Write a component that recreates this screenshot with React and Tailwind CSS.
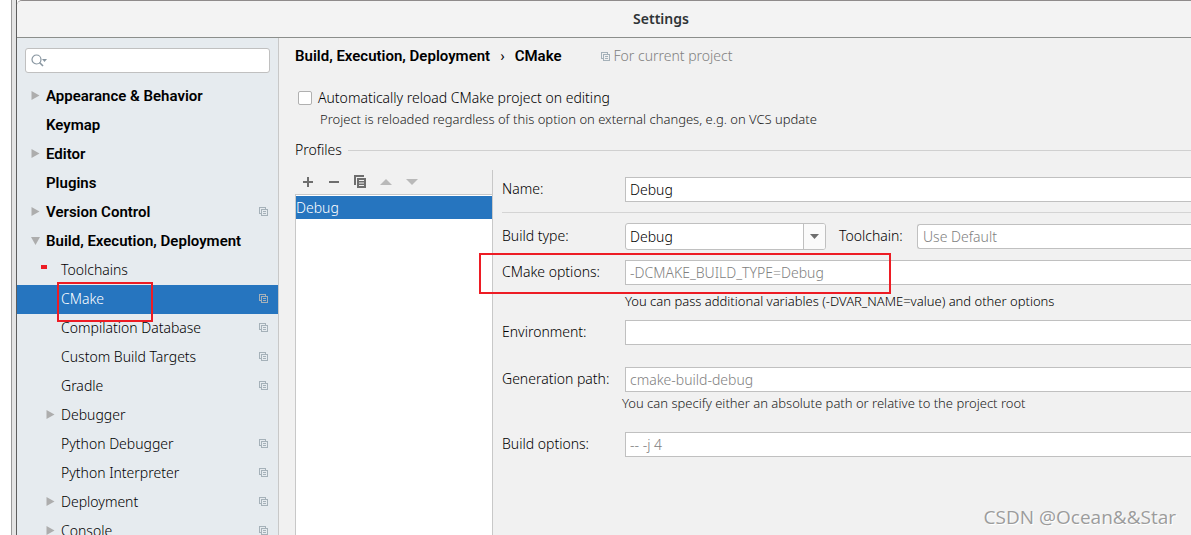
import React, { useState } from 'react'

const TREE = [
  { label: 'Appearance & Behavior', top: true, arrow: 'closed' },
  { label: 'Keymap', top: true },
  { label: 'Editor', top: true, arrow: 'closed' },
  { label: 'Plugins', top: true },
  { label: 'Version Control', top: true, arrow: 'closed', project: true },
  { label: 'Build, Execution, Deployment', top: true, arrow: 'open' },
  { label: 'Toolchains', dot: true },
  { label: 'CMake', project: true, selected: true },
  { label: 'Compilation Database', project: true },
  { label: 'Custom Build Targets', project: true },
  { label: 'Gradle', project: true },
  { label: 'Debugger', arrow: 'closed' },
  { label: 'Python Debugger', project: true },
  { label: 'Python Interpreter', project: true },
  { label: 'Deployment', arrow: 'closed', project: true },
  { label: 'Console', arrow: 'closed', project: true },
]

const FIELD = 'w-full min-w-0 h-[25px] px-1 bg-white border border-r-0 border-[#c0c0c0] text-black placeholder:text-[#808080] placeholder:opacity-100 outline-none'

function ProjectIcon() {
  return (
    <svg width="9" height="9" viewBox="0 0 9 9" fill="none" stroke="#a5b1b9" shapeRendering="crispEdges" className="flex-shrink-0">
      <path d="M2.5 6.5h-2v-6h6v2" />
      <path d="M2.5 2.5h6v6h-6z" />
      <path d="M4 4.5h3M4 6.5h3" />
    </svg>
  )
}

function TreeArrow({ state }) {
  return (
    <span className="w-[9px] flex justify-center flex-shrink-0">
      {state && (
        <svg width="9" height="9" viewBox="0 0 9 9" fill="#adadad">
          {state === 'open' ? <path d="M0 1h9L4.500 9z" /> : <path d="M0.500 0v9L8.500 4.500z" />}
        </svg>
      )}
    </span>
  )
}

function TreeRow({ item }) {
  return (
    <li className="relative">
      <a
        href="#"
        className={`flex items-center h-[29px] pr-2.5 pb-0.5 gap-1.5 ${item.top ? "pl-3.5 text-[15px] font-semibold font-['Roboto',sans-serif]" : 'pl-[29px]'} ${item.selected ? 'bg-[#2675bf] text-white' : 'text-black'}`}
      >
        <TreeArrow state={item.arrow} />
        <span className="flex-1 whitespace-nowrap">{item.label}</span>
        {item.project && <ProjectIcon />}
      </a>
      {item.dot && <span className="absolute left-6 top-[9px] w-1.5 h-1 bg-[#ed1c24]" />}
      {item.selected && <span className="absolute z-10 left-10 -top-[3px] w-24 h-10 border-2 border-[#ed1c24]" />}
    </li>
  )
}

function Sidebar() {
  return (
    <aside className="w-[262px] flex-shrink-0 bg-[#e6ebef] border-r border-[#c8c8c8]">
      <div className="px-2 pt-2.5 pb-[9px]">
        <label className="flex items-center h-[25px] px-[5px] bg-white border border-[#c0c0c0] rounded-[3px]">
          <svg width="17" height="13" viewBox="0 0 17 13" fill="none" stroke="#8795a0" className="flex-shrink-0">
            <circle cx="5.500" cy="5.500" r="4.500" strokeWidth="1.200" />
            <path d="M8.500 8.500l3.500 3.500" strokeWidth="1.600" />
            <path d="M11 5h5l-2.500 3z" fill="#8795a0" stroke="none" />
          </svg>
          <input type="text" aria-label="Search settings" className="flex-1 min-w-0 outline-none" />
        </label>
      </div>
      <ul>
        {TREE.map(item => <TreeRow key={item.label} item={item} />)}
      </ul>
    </aside>
  )
}

function Toolbar() {
  return (
    <div className="flex items-center gap-3 h-6 pl-1.5">
      <button aria-label="Add profile">
        <svg width="14" height="14" viewBox="0 0 14 14" stroke="#6e6e6e" strokeWidth="2"><path d="M2 7h10M7 2v10" /></svg>
      </button>
      <button aria-label="Remove profile">
        <svg width="14" height="14" viewBox="0 0 14 14" stroke="#6e6e6e" strokeWidth="2"><path d="M2 7h10" /></svg>
      </button>
      <button aria-label="Copy profile">
        <svg width="14" height="14" viewBox="0 0 14 14" fill="#6e6e6e">
          <path d="M1 0h10v2H3v8H1z" />
          <path fillRule="evenodd" d="M4 3h9v10H4zM6 5v1h5v-1zM6 7.500v1h5v-1zM6 10v1h5v-1z" />
        </svg>
      </button>
      <button aria-label="Move up" disabled>
        <svg width="14" height="14" viewBox="0 0 14 14" fill="#b9b9b9"><path d="M1 10h12L7 4z" /></svg>
      </button>
      <button aria-label="Move down" disabled>
        <svg width="14" height="14" viewBox="0 0 14 14" fill="#b9b9b9"><path d="M1 4h12L7 10z" /></svg>
      </button>
    </div>
  )
}

function ProfileForm() {
  const [name, setName] = useState('Debug')

  return (
    <form className="flex-1 min-w-0 pl-[9px] pt-[7px]">
      <div className="flex items-center">
        <label htmlFor="name" className="w-[123px] pb-0.5 flex-shrink-0">Name:</label>
        <input id="name" type="text" value={name} onChange={e => setName(e.target.value)} className={FIELD} />
      </div>
      <hr className="mt-2.5 mb-2.5 border-[#d4d4d4]" />

      <div className="flex items-center">
        <label htmlFor="buildType" className="w-[123px] pb-0.5 flex-shrink-0">Build type:</label>
        <div className="relative w-[201px] flex-shrink-0">
          <select id="buildType" className="w-full h-[27px] px-1 appearance-none bg-white border border-[#c0c0c0] rounded-[3px] text-black outline-none">
            <option>Debug</option>
          </select>
          <span className="absolute right-px top-px bottom-px w-[22px] flex items-center justify-center bg-[#fafafa] border-l border-[#c0c0c0] rounded-r-[2px] pointer-events-none">
            <svg width="9" height="5" viewBox="0 0 9 5" fill="#6e6e6e"><path d="M0 0h9L4.500 5z" /></svg>
          </span>
        </div>
        <label htmlFor="toolchain" className="w-[78px] ml-[13px] pb-0.5 flex-shrink-0">Toolchain:</label>
        <select id="toolchain" className="flex-1 min-w-0 h-[25px] px-[5px] appearance-none bg-white border border-r-0 border-[#c0c0c0] rounded-l-[3px] text-[#808080] outline-none">
          <option>Use Default</option>
        </select>
      </div>

      <div className="relative flex items-center mt-2.5">
        <label htmlFor="options" className="w-[123px] pb-0.5 flex-shrink-0">CMake options:</label>
        <input id="options" type="text" placeholder="-DCMAKE_BUILD_TYPE=Debug" className={FIELD} />
        <span className="absolute -left-[23px] -top-[7px] w-[412px] h-[41px] border-2 border-[#ed1c24] pointer-events-none" />
      </div>
      <p className="ml-[123px] mt-1.5 text-[13px] leading-5">You can pass additional variables (-DVAR_NAME=value) and other options</p>

      <div className="flex items-center mt-[9px]">
        <label htmlFor="environment" className="w-[123px] pb-0.5 flex-shrink-0">Environment:</label>
        <input id="environment" type="text" className={FIELD} />
      </div>

      <div className="flex items-center mt-[22px]">
        <label htmlFor="path" className="w-[123px] pb-0.5 flex-shrink-0">Generation path:</label>
        <input id="path" type="text" placeholder="cmake-build-debug" className={FIELD} />
      </div>
      <p className="ml-[120px] mt-px text-[13px] leading-5 text-[#222]">You can specify either an absolute path or relative to the project root</p>

      <div className="flex items-center mt-[19px]">
        <label htmlFor="buildOptions" className="w-[123px] pb-0.5 flex-shrink-0">Build options:</label>
        <input id="buildOptions" type="text" placeholder="-- -j 4" className={FIELD} />
      </div>
    </form>
  )
}

export default function App() {
  return (
    <div className="h-screen flex overflow-hidden bg-white text-[14px] leading-5 text-black font-light font-['Noto_Sans',sans-serif]">
      <div className="w-[6px] ml-[11px] flex-shrink-0 bg-[#e4e4e4] border-x border-l-[#9a9a9a] border-r-[#5e5e5e]" />
      <div className="flex-1 min-w-0 flex flex-col bg-[#f1f1f1] border-t border-[#8f8b8b] rounded-tl-[5px]">
        <header className="h-[37px] flex-shrink-0 flex items-center bg-[#f3f3f3] border-b border-[#8b8e8b] rounded-tl-[5px]">
          <h1 className="w-full pl-[114px] text-center font-semibold text-[#2e3436]">Settings</h1>
        </header>

        <div className="flex-1 min-h-0 flex">
          <Sidebar />

          <main className="flex-1 min-w-0 flex flex-col pl-4">
            <div className="flex items-center pt-2 whitespace-nowrap">
              <h2 className="flex items-center gap-2.5 text-[15px] leading-5 font-semibold font-['Roboto',sans-serif]">
                <span>Build, Execution, Deployment</span>
                <span className="font-normal">›</span>
                <span>CMake</span>
              </h2>
              <span className="flex items-center gap-[3px] ml-10 text-[#808080]">
                <ProjectIcon />
                For current project
              </span>
            </div>

            <label className="flex items-center gap-1.5 mt-[22px] pl-[3px]">
              <input type="checkbox" className="appearance-none w-3.5 h-3.5 bg-white border border-[#b0b0b0] rounded-[2px]" />
              Automatically reload CMake project on editing
            </label>
            <p className="mt-px pl-[25px] text-[13px] leading-5 text-[#222]">
              Project is reloaded regardless of this option on external changes, e.g. on VCS update
            </p>

            <div className="flex items-center gap-1.5 mt-[11px]">
              <h3>Profiles</h3>
              <div className="flex-1 border-t border-[#d0d0d0]" />
            </div>

            <div className="flex-1 min-h-0 flex mt-2.5">
              <div className="w-[198px] flex-shrink-0 flex flex-col border-r border-[#c8c8c8]">
                <Toolbar />
                <ul className="flex-1 pt-px bg-white border-t border-l border-[#c8c8c8]">
                  <li className="h-[23px] leading-[23px] bg-[#2675bf] text-white">Debug</li>
                </ul>
              </div>
              <ProfileForm />
            </div>
          </main>
        </div>
      </div>
      <div className="absolute right-[15px] bottom-1 text-[19px] leading-7 font-normal font-['Open_Sans','Noto_Sans',sans-serif] text-[#9c9c9c] [text-shadow:1px_1px_0_#fff]">CSDN @Ocean&amp;&amp;Star</div>
    </div>
  )
}
